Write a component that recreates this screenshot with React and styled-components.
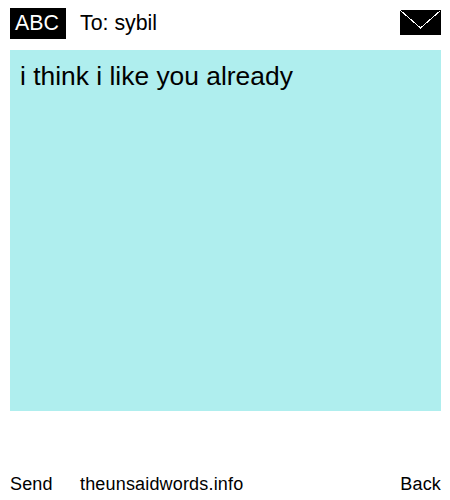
import React from "react";
import styled, { createGlobalStyle } from "styled-components";

const Global = createGlobalStyle`
  html, body { margin: 0; padding: 0; background: #fff; }
  body { font-family: "Liberation Sans", Arial, sans-serif; color: #000; }
`;

const Page = styled.div`
  width: 450px;
  height: 500px;
  box-sizing: border-box;
  padding: 8px 9px 0 10px;
  display: flex;
  flex-direction: column;
`;

const Header = styled.header`
  height: 31px;
  display: flex;
  align-items: center;
`;

const Mode = styled.div`
  width: 56px;
  height: 31px;
  box-sizing: border-box;
  padding-left: 5px;
  background: #000;
  color: #fff;
  font-size: 21.33px;
  line-height: 30px;
`;

const Recipient = styled.div`
  margin-left: 14px;
  font-size: 21.33px;
  flex: 1;
`;

const EnvelopeIcon = styled.svg`
  display: block;
  align-self: flex-start;
  margin-top: 2px;
`;

const Message = styled.main`
  margin-top: 11px;
  height: 361px;
  box-sizing: border-box;
  padding: 10px;
  background: #afeeee;
  font-size: 26.4px;
  line-height: 32px;
`;

const Footer = styled.footer`
  margin-top: 62px;
  display: flex;
  font-size: 18px;
  line-height: 22px;
  letter-spacing: 0.17px;
`;

const Send = styled.span`
  width: 70px;
`;

const Site = styled.span`
  flex: 1;
`;

const Envelope = () => (
  <EnvelopeIcon width="41" height="25" viewBox="0 0 41 25">
    <rect width="41" height="25" fill="#000" />
    <path d="M0.5 0.5 L20.5 18 L40.5 0.5" fill="none" stroke="#fff" strokeWidth="1" shapeRendering="crispEdges" />
  </EnvelopeIcon>
);

export default function App() {
  return (
    <Page>
      <Global />
      <Header>
        <Mode>ABC</Mode>
        <Recipient>To: sybil</Recipient>
        <Envelope />
      </Header>
      <Message>i think i like you already</Message>
      <Footer>
        <Send>Send</Send>
        <Site>theunsaidwords.info</Site>
        <span>Back</span>
      </Footer>
    </Page>
  );
}
